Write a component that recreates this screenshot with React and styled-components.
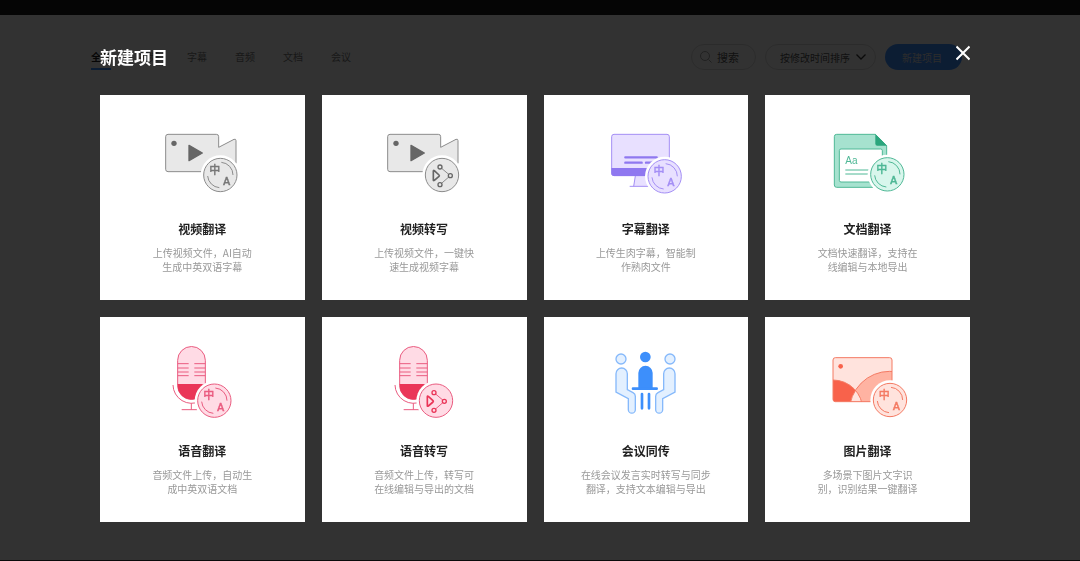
import { useState } from "react";
import styled, { createGlobalStyle } from "styled-components";

const tabs = ["全部", "视频", "字幕", "音频", "文档", "会议"];

const gray = { line: "#8c8c8c", fill: "#e8e8e8", solid: "#666666" };
const purple = { line: "#a48ff5", fill: "#e8e0ff", solid: "#8f78f0" };
const green = { line: "#4fb896", fill: "#d8f6ec", solid: "#2ba57d" };
const red = { line: "#ea5c80", fill: "#ffdbe5", solid: "#ea3558" };
const blue = { line: "#86b9fb", fill: "#e3f0ff", solid: "#3d8ffb" };
const orange = { line: "#f47a63", fill: "#ffe3dd", solid: "#f8624b" };

const BadgeText = styled.text`
    font-family: Roboto, "Noto Sans CJK SC", sans-serif;
    font-size: 33px;
    font-weight: 500;
    text-anchor: middle;
    stroke-width: 1px;
`;
const SampleText = styled.text`
    font-family: "Liberation Sans", sans-serif;
    font-size: 30px;
`;

const TranslateBadge = ({ x, y, c, text = c.line }) => (
    <g transform={`translate(${x} ${y})`}>
        <circle r="59" fill="#fff" />
        <circle r="50" fill={c.fill} stroke={c.line} strokeWidth="3" />
        <path d="M3 -38A38 38 0 0 1 38 0M-38 3A38 38 0 0 0 -3 38" fill="none" stroke={c.line} strokeWidth="3" />
        <BadgeText x="-17" y="-4" fill={text} stroke={text}>中</BadgeText>
        <BadgeText x="19" y="30" fill={text} stroke={text}>A</BadgeText>
    </g>
);

const TranscribeBadge = ({ x, y, c }) => (
    <g transform={`translate(${x} ${y})`}>
        <circle r="59" fill="#fff" />
        <circle r="50" fill={c.fill} stroke={c.line} strokeWidth="3" />
        <path d="M-6 -24L25 2L-6 29" fill="none" stroke={c.line} strokeWidth="3" />
        <g fill={c.fill} stroke={c.solid} strokeWidth="5" strokeLinejoin="round">
            <path d="M-26 -12Q-26 -15 -23 -13L-9 0Q-7 2 -9 4L-23 16Q-26 18 -26 15Z" />
            <circle cx="-6" cy="-24" r="6" strokeWidth="4" />
            <circle cx="25" cy="2" r="6" strokeWidth="4" />
            <circle cx="-6" cy="29" r="6" strokeWidth="4" />
        </g>
    </g>
);

const Camera = () => (
    <g>
        <path
            d="M54 43H199Q206 43 206 50V82L252 58Q258 56 258 62V130L206 155H54Q47 155 47 148V50Q47 43 54 43Z"
            fill={gray.fill} stroke={gray.line} strokeWidth="3"
        />
        <circle cx="72" cy="70" r="8" fill={gray.solid} />
        <path d="M117 76L157 99L117 122Z" fill={gray.solid} stroke={gray.solid} strokeWidth="4" strokeLinejoin="round" />
    </g>
);

const Microphone = () => (
    <g fill="none" stroke={red.line} strokeWidth="3">
        <path d="M83 72A41 41 0 0 1 166 72V148A41 41 0 0 1 83 148Z" fill={red.fill} />
        <path d="M83 143H166V148A41 41 0 0 1 83 148Z" fill={red.solid} stroke="none" />
        <path d="M83 82H116M83 95H116M83 107H116M83 118H116M133 82H166M133 95H166M133 107H166M133 118H166" />
        <path d="M69 146A56 56 0 0 0 150 195M124 201V220M95 220H142" />
    </g>
);

const icons = {
    videoTranslate: (
        <>
            <Camera />
            <TranslateBadge x={211} y={165} c={gray} text="#777777" />
        </>
    ),
    videoTranscribe: (
        <>
            <Camera />
            <TranscribeBadge x={210} y={165} c={gray} />
        </>
    ),
    subtitle: (
        <>
            <path d="M124 168L119 199H175V168Z" fill={purple.fill} />
            <path d="M124 168L119 199M107 199H175" stroke={purple.line} strokeWidth="3" />
            <rect x="53" y="43" width="173" height="124" rx="7" fill={purple.fill} stroke={purple.line} strokeWidth="3" />
            <path d="M52 144H227V160Q227 168 219 168H60Q52 168 52 160Z" fill={purple.solid} />
            <path d="M94 112H188M94 128H143M156 128H180" stroke={purple.solid} strokeWidth="7" strokeLinecap="round" />
            <TranslateBadge x={212} y={169} c={purple} />
        </>
    ),
    document: (
        <>
            <path d="M62 43H178L212 77V202H62Q55 202 55 195V50Q55 43 62 43Z" fill="#a6e2cf" stroke={green.line} strokeWidth="3" />
            <path d="M178 42L213 77H184Q178 77 178 71Z" fill={green.solid} />
            <rect x="70" y="87" width="129" height="99" rx="5" fill="#fff" stroke={green.line} strokeWidth="3" />
            <SampleText x="88" y="133" fill={green.line}>Aa</SampleText>
            <path d="M88 150H165M88 162H160" stroke={green.line} strokeWidth="3" />
            <TranslateBadge x={214} y={163} c={green} />
        </>
    ),
    voiceTranslate: (
        <>
            <Microphone />
            <TranslateBadge x={193} y={193} c={red} />
        </>
    ),
    voiceTranscribe: (
        <>
            <Microphone />
            <TranscribeBadge x={192} y={193} c={red} />
        </>
    ),
    meeting: (
        <>
            {["translate(0 0)", "translate(309 0) scale(-1 1)"].map((side) => (
                <g key={side} transform={side} fill={blue.fill} stroke={blue.line} strokeWidth="4">
                    <circle cx="81" cy="68" r="15" />
                    <path d="M66 112A17 17 0 0 1 100 112V160L117 169Q124 173 124 180V220A10 10 0 0 1 103 220V187L66 167Z" />
                </g>
            ))}
            <circle cx="154" cy="62" r="16" fill={blue.solid} />
            <path d="M133 157V110A21 21 0 0 1 176 110V157Z" fill={blue.solid} />
            <path d="M117 157H188M144 173V216M165 173V216" stroke={blue.solid} strokeWidth="8" strokeLinecap="round" />
        </>
    ),
    picture: (
        <>
            <clipPath id="frame">
                <rect x="51" y="64" width="177" height="132" rx="7" />
            </clipPath>
            <clipPath id="hill">
                <circle cx="51" cy="220" r="89" />
            </clipPath>
            <rect x="51" y="64" width="177" height="132" rx="7" fill={orange.fill} />
            <g clipPath="url(#frame)">
                <circle cx="51" cy="220" r="89" fill={orange.solid} />
                <circle cx="221" cy="226" r="121" fill="#ffb3a2" />
                <circle cx="221" cy="226" r="121" fill={orange.fill} clipPath="url(#hill)" />
                <circle cx="51" cy="220" r="89" fill="none" stroke={orange.line} strokeWidth="3" />
                <circle cx="221" cy="226" r="121" fill="none" stroke={orange.line} strokeWidth="3" />
            </g>
            <rect x="51" y="64" width="177" height="132" rx="7" fill="none" stroke={orange.line} strokeWidth="3" />
            <circle cx="74" cy="90" r="7" fill={orange.solid} />
            <TranslateBadge x={222} y={191} c={orange} />
        </>
    ),
};

const projects = [
    { icon: "videoTranslate", box: "0 0 315 270", title: "视频翻译", desc: "上传视频文件，AI自动\n生成中英双语字幕" },
    { icon: "videoTranscribe", box: "0 0 315 270", title: "视频转写", desc: "上传视频文件，一键快\n速生成视频字幕" },
    { icon: "subtitle", box: "-3 0 315 270", title: "字幕翻译", desc: "上传生肉字幕，智能制\n作熟肉文件" },
    { icon: "document", box: "-3 0 315 270", title: "文档翻译", desc: "文档快速翻译，支持在\n线编辑与本地导出" },
    { icon: "voiceTranslate", box: "0 17 315 270", title: "语音翻译", desc: "音频文件上传，自动生\n成中英双语文档" },
    { icon: "voiceTranscribe", box: "0 17 315 270", title: "语音转写", desc: "音频文件上传，转写可\n在线编辑与导出的文档" },
    { icon: "meeting", box: "-3 17 315 270", title: "会议同传", desc: "在线会议发言实时转写与同步\n翻译，支持文本编辑与导出" },
    { icon: "picture", box: "-3 17 315 270", title: "图片翻译", desc: "多场景下图片文字识\n别，识别结果一键翻译" },
];

const App = () => {
    const [active, setActive] = useState("全部");
    const [open, setOpen] = useState(true);
    return (
        <>
            <GlobalStyle />
            <Page>
                <TopBar />
                <Toolbar>
                    <Tabs>
                        {tabs.map((tab) => (
                            <Tab key={tab} $active={tab === active} onClick={() => setActive(tab)}>{tab}</Tab>
                        ))}
                    </Tabs>
                    <Actions>
                        <Search>
                            <svg width="12" height="12" viewBox="0 0 12 12" fill="none" stroke="#a0a0a0">
                                <circle cx="5" cy="5" r="4.5" />
                                <path d="M8.5 8.5L11.5 11.5" />
                            </svg>
                            <input type="text" placeholder="搜索" aria-label="搜索" />
                        </Search>
                        <Sort>
                            <select aria-label="排序">
                                <option>按修改时间排序</option>
                            </select>
                            <svg width="10" height="6" viewBox="0 0 10 6" fill="none" stroke="#333" strokeWidth="1.3">
                                <path d="M0.5 0.5L5 5L9.5 0.5" />
                            </svg>
                        </Sort>
                        <Create onClick={() => setOpen(true)}>新建项目</Create>
                    </Actions>
                </Toolbar>
            </Page>
            {open && (
                <Overlay role="dialog" aria-labelledby="dialog-title">
                    <DialogHeader>
                        <h2 id="dialog-title">新建项目</h2>
                        <Close aria-label="关闭" onClick={() => setOpen(false)}>
                            <svg width="14" height="16" viewBox="0 0 14 16" stroke="#fff" strokeWidth="2">
                                <path d="M0.5 1.5L13.5 14.5M13.5 1.5L0.5 14.5" />
                            </svg>
                        </Close>
                    </DialogHeader>
                    <Grid>
                        {projects.map((p) => (
                            <Card key={p.title}>
                                <svg width="105" height="90" viewBox={p.box} fill="none" aria-hidden="true">
                                    {icons[p.icon]}
                                </svg>
                                <CardTitle>{p.title}</CardTitle>
                                <CardText>{p.desc}</CardText>
                            </Card>
                        ))}
                    </Grid>
                </Overlay>
            )}
        </>
    );
};

const GlobalStyle = createGlobalStyle`
*{
    box-sizing: border-box;
}
body{
    margin: 0;
    font-family: "Noto Sans CJK SC", sans-serif;
}
button,input,select{
    font-family: inherit;
    border: none;
    padding: 0;
    background: transparent;
}
button{
    cursor: pointer;
}
svg{
    flex-shrink: 0;
}
`;
const Page = styled.div`
    min-height: 100vh;
    background: #fafafa;
    border-bottom: 1px solid #333;
`;
const TopBar = styled.header`
    height: 15px;
    background: #1b1b1b;
`;
const Toolbar = styled.div`
    display: flex;
    justify-content: space-between;
    padding: 29px 118px 0 91px;
`;
const Tabs = styled.nav`
    display: flex;
    gap: 28px;
`;
const Tab = styled.button`
    position: relative;
    height: 26px;
    font-size: 10px;
    line-height: 26px;
    font-weight: ${(p) => (p.$active ? 700 : 400)};
    color: ${(p) => (p.$active ? "#222" : "#777")};
    &::after{
        content: "";
        display: ${(p) => (p.$active ? "block" : "none")};
        position: absolute;
        left: 0;
        bottom: 0;
        width: 100%;
        height: 2px;
        background: #3d8fff;
    }
`;
const Actions = styled.div`
    display: flex;
    gap: 9px;
`;
const Search = styled.label`
    display: flex;
    align-items: center;
    gap: 5px;
    height: 26px;
    padding: 0 10px 0 8px;
    border: 1px solid #d8d8d8;
    border-radius: 13px;
    input{
        width: 28px;
        font-size: 11px;
        outline: none;
    }
    input::placeholder{
        color: #555;
    }
`;
const Sort = styled.label`
    display: flex;
    align-items: center;
    gap: 6px;
    height: 26px;
    padding: 0 9px 0 14px;
    border: 1px solid #d8d8d8;
    border-radius: 13px;
    select{
        appearance: none;
        font-size: 10px;
        color: #555;
    }
`;
const Create = styled.button`
    height: 26px;
    padding: 0 20px 0 17px;
    border-radius: 13px;
    background: #3d8fff;
    color: #ddd;
    font-size: 10px;
`;
const Overlay = styled.div`
    position: fixed;
    inset: 0;
    overflow: auto;
    padding: 45px 110px 0 100px;
    background: rgba(0,0,0,0.8);
`;
const DialogHeader = styled.div`
    display: flex;
    align-items: flex-start;
    justify-content: space-between;
    margin-bottom: 26px;
    h2{
        margin: 0;
        font-size: 17px;
        line-height: 24px;
        font-weight: 700;
        color: #fff;
    }
`;
const Close = styled.button`
    display: flex;
`;
const Grid = styled.div`
    display: grid;
    grid-template-columns: repeat(4, 1fr);
    gap: 17px;
`;
const Card = styled.button`
    display: flex;
    flex-direction: column;
    align-items: center;
    aspect-ratio: 1;
    padding-top: 25px;
    background: #fff;
`;
const CardTitle = styled.span`
    margin-top: 10px;
    font-size: 12px;
    line-height: 18px;
    font-weight: 700;
    color: #222;
`;
const CardText = styled.span`
    margin-top: 8px;
    font-size: 10px;
    line-height: 14px;
    color: #999;
    white-space: pre-line;
`;

export default App;
